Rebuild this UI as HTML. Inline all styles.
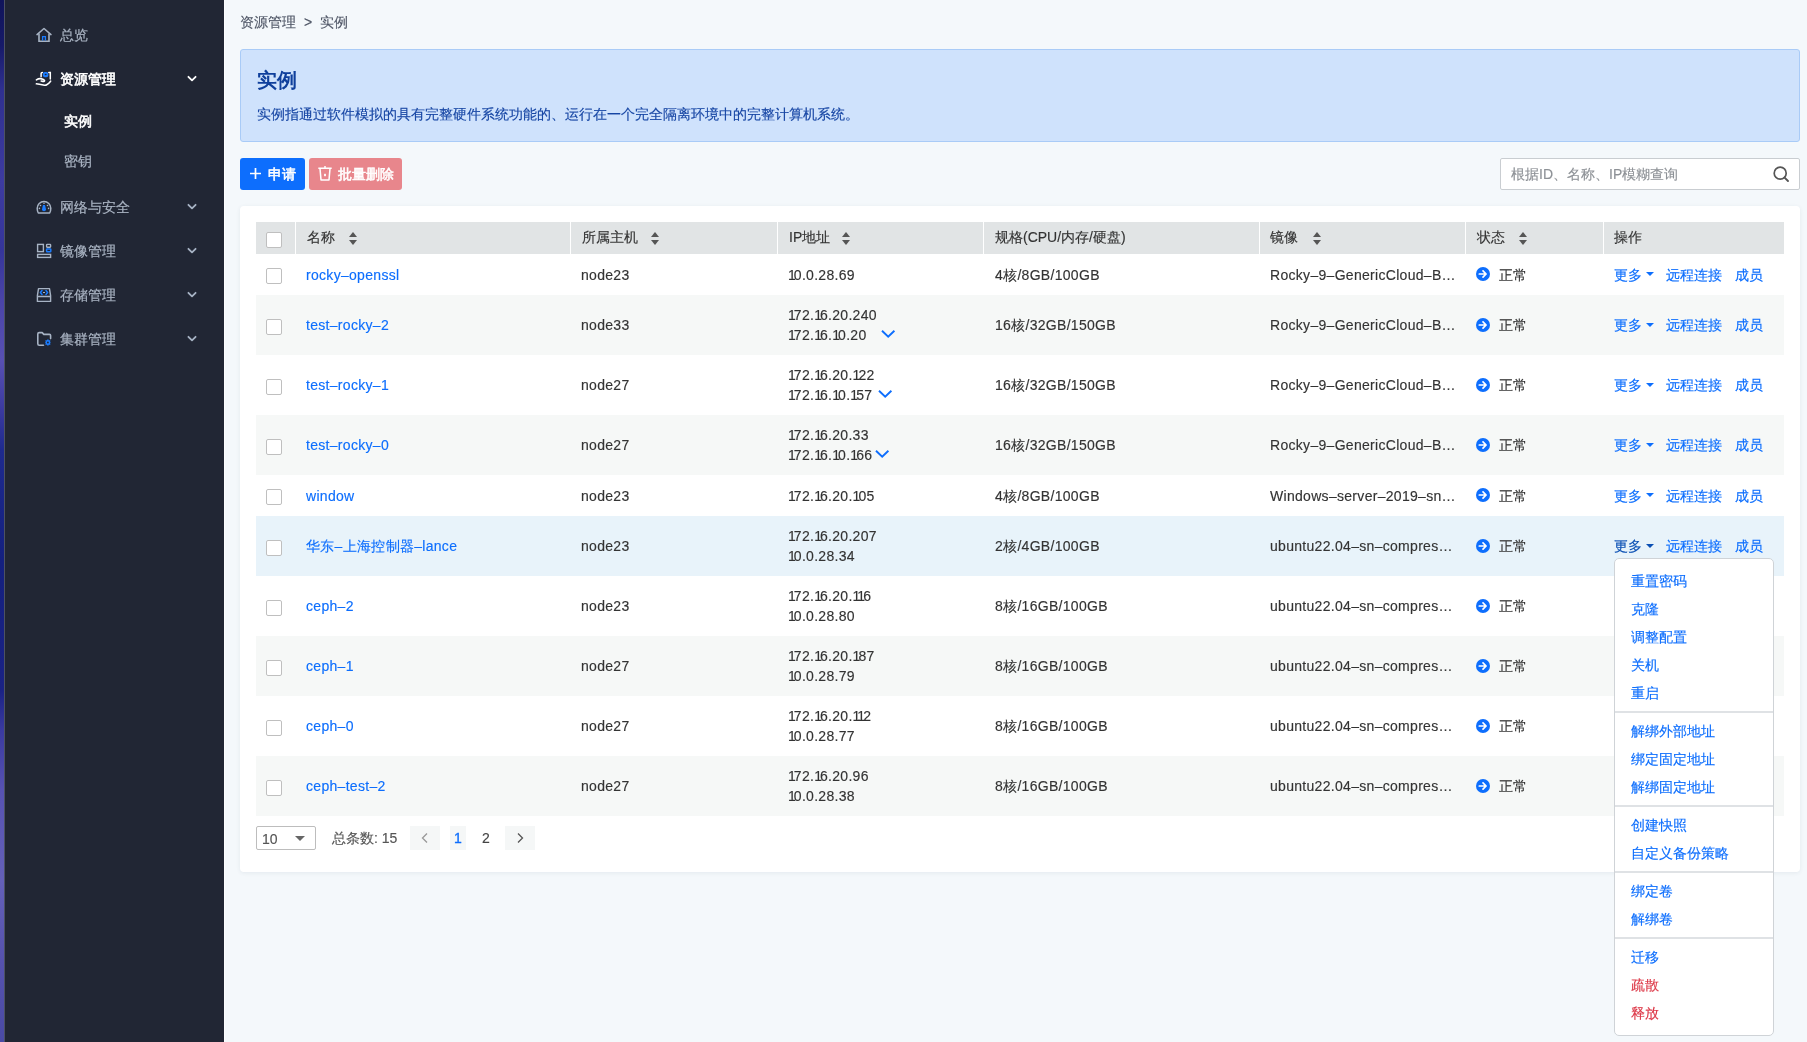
<!DOCTYPE html>
<html><head><meta charset="utf-8">
<style>
*{box-sizing:border-box;margin:0;padding:0}
html,body{width:1807px;height:1042px;overflow:hidden}
body{font-family:"Liberation Sans",sans-serif;font-size:14px;color:#333;background:#f4f8fb;position:relative;-webkit-text-stroke-width:0.15px}
.abs{position:absolute}
.mi{position:absolute;left:60px;height:20px;line-height:20px;color:#a9b3c2;font-size:14px;white-space:nowrap;-webkit-text-stroke-width:0.2px}
.mi.act{color:#fff;font-weight:normal;-webkit-text-stroke-width:0.6px}
.th{position:absolute;height:20px;line-height:20px;color:#333;white-space:nowrap}
.td{position:absolute;height:20px;line-height:20px;color:#333;white-space:nowrap;letter-spacing:0.3px}
.ip{letter-spacing:0.3px}
.n1{letter-spacing:-2px}
.cj{letter-spacing:0}
.lnk{color:#0d6efd}
.cb{position:absolute;width:16px;height:16px;border:1px solid #bfbfbf;border-radius:2px;background:#fff}
.sort{position:absolute;width:8px;height:14px}
.sort .up{position:absolute;left:0;top:0;width:0;height:0;border-left:4px solid transparent;border-right:4px solid transparent;border-bottom:5px solid #555}
.sort .dn{position:absolute;left:0;top:8px;width:0;height:0;border-left:4px solid transparent;border-right:4px solid transparent;border-top:5px solid #555}
.caret{position:absolute;width:0;height:0;border-left:4px solid transparent;border-right:4px solid transparent;border-top:4.5px solid #0d6efd}
.dd{position:absolute;left:1631px;height:20px;line-height:20px;color:#0d6efd;white-space:nowrap}

</style></head><body>
<div id="wrap" style="position:absolute;left:0;top:0;width:1807px;height:1042px;will-change:transform">
<div class="abs" style="left:0;top:0;width:5px;height:1042px;background:linear-gradient(180deg,#10145a 0px,#161a68 45px,#2f3090 90px,#3d3ba0 180px,#35359a 250px,#4a44a8 300px,#5850b2 360px,#3b3aa0 410px,#1e2a8e 450px,#14207e 560px,#1a2284 690px,#3a3aa0 730px,#5752b2 790px,#6460b8 880px,#5652ae 960px,#4a4aa4 1042px)"></div>
<div class="abs" style="left:4px;top:0;width:1px;height:1042px;background:#4d5262"></div>
<div class="abs" style="left:5px;top:0;width:219px;height:1042px;background:#212634"></div>
<div class="abs" style="left:224px;top:0;width:1px;height:1042px;background:#fcfdfe"></div>

<svg class="abs" style="left:32px;top:24px" width="24" height="24" viewBox="0 0 24 24"><path d="M5 10.6 L12 4.5 L19 10.6" fill="none" stroke="#a7b3c4" stroke-width="1.5" stroke-linejoin="round" stroke-linecap="round"/><path d="M7 9.5 V17.3 H17 V9.5" fill="none" stroke="#a7b3c4" stroke-width="1.6"/><path d="M10.6 16.5 V12.6 H13.4 V16.5" fill="none" stroke="#1b7cff" stroke-width="1.3"/></svg>
<div class="mi" style="top:25px">总览</div>

<svg class="abs" style="left:32px;top:68px" width="24" height="24" viewBox="0 0 24 24"><path d="M9.1 8.8 V5.6 Q9.1 4.4 10.4 4.4 M16.8 4.4 H18.3 V11" fill="none" stroke="#fff" stroke-width="1.5" stroke-linecap="round"/><rect x="10.9" y="4" width="5.4" height="5.2" rx="2" fill="#1b7cff"/><ellipse cx="13.7" cy="6.5" rx="1" ry="0.7" fill="#212634"/><path d="M4.4 11.9 Q7.5 9.8 10.8 11.2 L12.5 12.4 Q12.8 13.6 10.8 13.4 L9.2 13 M4.4 15.8 Q9 16.6 12.5 17.3 Q15 17.6 18.6 13.2" fill="none" stroke="#fff" stroke-width="1.6" stroke-linecap="round" stroke-linejoin="round"/></svg>
<div class="mi act" style="top:69px">资源管理</div>
<svg class="abs" style="left:180px;top:68px" width="24" height="24" viewBox="0 0 24 24"><path d="M8.4 8.8 L12 12.4 L15.6 8.8" fill="none" stroke="#fff" stroke-width="1.8" stroke-linecap="round" stroke-linejoin="round"/></svg>

<div class="mi act" style="top:111px;left:64px">实例</div>
<div class="mi" style="top:151px;left:64px">密钥</div>

<svg class="abs" style="left:32px;top:196px" width="24" height="24" viewBox="0 0 24 24"><path d="M6.3 17 Q5.2 15 5.2 12.3 A6.8 6.8 0 0 1 18.8 12.3 Q18.8 15 17.7 17 Z" fill="none" stroke="#a7b3c4" stroke-width="1.5" stroke-linejoin="round"/><circle cx="12" cy="7.3" r="0.8" fill="#a7b3c4"/><circle cx="8.5" cy="9.5" r="0.8" fill="#a7b3c4"/><circle cx="15.5" cy="9.5" r="0.8" fill="#a7b3c4"/><circle cx="7.4" cy="12.4" r="0.8" fill="#a7b3c4"/><circle cx="16.6" cy="12.4" r="0.8" fill="#a7b3c4"/><path d="M11 9 H13 L14 13.2 A2 2 0 1 1 10 13.2 Z" fill="#1b7cff"/></svg>
<div class="mi" style="top:197px">网络与安全</div>
<svg class="abs" style="left:180px;top:196px" width="24" height="24" viewBox="0 0 24 24"><path d="M8.4 8.8 L12 12.4 L15.6 8.8" fill="none" stroke="#a7b3c4" stroke-width="1.8" stroke-linecap="round" stroke-linejoin="round"/></svg>

<svg class="abs" style="left:32px;top:240px" width="24" height="24" viewBox="0 0 24 24"><rect x="5.6" y="4.4" width="5.8" height="7.2" fill="none" stroke="#a7b3c4" stroke-width="1.4"/><rect x="14.6" y="4.4" width="4" height="2.8" rx="0.6" fill="none" stroke="#a7b3c4" stroke-width="1.4"/><rect x="14.6" y="9" width="4.2" height="2.8" rx="0.6" fill="none" stroke="#1b7cff" stroke-width="1.5"/><rect x="5.6" y="14.4" width="13" height="3" fill="none" stroke="#a7b3c4" stroke-width="1.4"/></svg>
<div class="mi" style="top:241px">镜像管理</div>
<svg class="abs" style="left:180px;top:240px" width="24" height="24" viewBox="0 0 24 24"><path d="M8.4 8.8 L12 12.4 L15.6 8.8" fill="none" stroke="#a7b3c4" stroke-width="1.8" stroke-linecap="round" stroke-linejoin="round"/></svg>

<svg class="abs" style="left:32px;top:284px" width="24" height="24" viewBox="0 0 24 24"><path d="M6.5 4.6 H17.5 L18.6 11.6 V17.4 H5.4 V11.6 Z M5.4 12.5 H18.6" fill="none" stroke="#a7b3c4" stroke-width="1.4" stroke-linejoin="round"/><path d="M10 6.6 L8.4 8.5 L10 10.4 M14 6.6 L15.6 8.5 L14 10.4" fill="none" stroke="#1b7cff" stroke-width="1.5" stroke-linecap="round" stroke-linejoin="round"/><path d="M11 8.5 H13" stroke="#a7b3c4" stroke-width="1"/></svg>
<div class="mi" style="top:285px">存储管理</div>
<svg class="abs" style="left:180px;top:284px" width="24" height="24" viewBox="0 0 24 24"><path d="M8.4 8.8 L12 12.4 L15.6 8.8" fill="none" stroke="#a7b3c4" stroke-width="1.8" stroke-linecap="round" stroke-linejoin="round"/></svg>

<svg class="abs" style="left:32px;top:328px" width="24" height="24" viewBox="0 0 24 24"><path d="M11.5 17.2 H7.2 Q5.8 17.2 5.8 15.8 V6 Q5.8 4.6 7.2 4.6 H10.2 L11.8 6.4 H17.4 Q18.6 6.4 18.6 7.6 V10.6" fill="none" stroke="#a7b3c4" stroke-width="1.6" stroke-linecap="round" stroke-linejoin="round"/><g transform="translate(15.9 14.5)"><path d="M-0.7 -3 H0.7 L1 -2 L2 -2.5 L2.7 -1.5 L2 -0.7 L2.9 0 L2 0.7 L2.7 1.5 L2 2.5 L1 2 L0.7 3 H-0.7 L-1 2 L-2 2.5 L-2.7 1.5 L-2 0.7 L-2.9 0 L-2 -0.7 L-2.7 -1.5 L-2 -2.5 L-1 -2 Z" fill="#1b7cff"/><circle r="0.9" fill="#212634"/></g></svg>
<div class="mi" style="top:329px">集群管理</div>
<svg class="abs" style="left:180px;top:328px" width="24" height="24" viewBox="0 0 24 24"><path d="M8.4 8.8 L12 12.4 L15.6 8.8" fill="none" stroke="#a7b3c4" stroke-width="1.8" stroke-linecap="round" stroke-linejoin="round"/></svg>

<!-- breadcrumb -->
<div class="abs" style="left:240px;top:12px;line-height:20px;color:#4f5666;font-size:14px;white-space:nowrap">资源管理</div>
<div class="abs" style="left:304px;top:12px;line-height:20px;color:#4f5666;font-size:14px">&gt;</div>
<div class="abs" style="left:320px;top:12px;line-height:20px;color:#4f5666;font-size:14px">实例</div>

<!-- alert -->
<div class="abs" style="left:240px;top:49px;width:1560px;height:93px;background:#cfe2fc;border:1px solid #a9cbf7;border-radius:3px"></div>
<div class="abs" style="left:257px;top:67px;line-height:26px;font-size:20px;font-weight:bold;color:#0f3f9c;-webkit-text-stroke-width:0">实例</div>
<div class="abs" style="left:257px;top:104px;line-height:20px;font-size:14px;color:#1746a4;white-space:nowrap">实例指通过软件模拟的具有完整硬件系统功能的、运行在一个完全隔离环境中的完整计算机系统。</div>

<!-- buttons -->
<div class="abs" style="left:240px;top:158px;width:65px;height:32px;background:#0d6efd;border-radius:3px"></div>
<svg class="abs" style="left:249px;top:167px" width="14" height="14" viewBox="0 0 14 14"><path d="M6.5 1 V12 M1 6.5 H12" stroke="#fff" stroke-width="1.7"/></svg>
<div class="abs" style="left:268px;top:164px;line-height:20px;color:#fff;-webkit-text-stroke-width:0.55px">申请</div>
<div class="abs" style="left:309px;top:158px;width:93px;height:32px;background:#e8868c;border-radius:3px"></div>
<svg class="abs" style="left:317px;top:165px" width="16" height="16" viewBox="0 0 16 16"><path d="M1.3 3.3 H14.7 M8 1 V3.3" fill="none" stroke="#fff" stroke-width="1.5"/><path d="M3 3.6 L4 14.9 H12 L13 3.6" fill="none" stroke="#fff" stroke-width="1.5" stroke-linejoin="round"/><rect x="7.1" y="8.8" width="1.8" height="2.4" fill="#fff"/></svg>
<div class="abs" style="left:338px;top:164px;line-height:20px;color:#fff;-webkit-text-stroke-width:0.55px">批量删除</div>

<!-- search -->
<div class="abs" style="left:1500px;top:158px;width:300px;height:32px;background:#fff;border:1px solid #c9cdd1;border-radius:2px"></div>
<div class="abs" style="left:1511px;top:164px;line-height:20px;color:#8d9196;white-space:nowrap">根据ID、名称、IP模糊查询</div>
<svg class="abs" style="left:1771px;top:164px" width="20" height="20" viewBox="0 0 20 20"><circle cx="9.2" cy="9.2" r="6" fill="none" stroke="#555" stroke-width="1.7"/><path d="M13.6 13.6 L17 17" stroke="#555" stroke-width="1.9" stroke-linecap="round"/></svg>

<!-- card -->
<div class="abs" style="left:240px;top:206px;width:1560px;height:666px;background:#fff;border-radius:4px;box-shadow:0 1px 4px rgba(40,60,90,0.08)"></div>
<div class="abs" style="left:256px;top:222px;width:1528px;height:32px;background:#e1e4e5"></div>
<div class="abs" style="left:295px;top:222px;width:1px;height:32px;background:#fff"></div>
<div class="abs" style="left:570px;top:222px;width:1px;height:32px;background:#fff"></div>
<div class="abs" style="left:777px;top:222px;width:1px;height:32px;background:#fff"></div>
<div class="abs" style="left:983px;top:222px;width:1px;height:32px;background:#fff"></div>
<div class="abs" style="left:1259px;top:222px;width:1px;height:32px;background:#fff"></div>
<div class="abs" style="left:1465px;top:222px;width:1px;height:32px;background:#fff"></div>
<div class="abs" style="left:1603px;top:222px;width:1px;height:32px;background:#fff"></div>
<div class="cb" style="left:266px;top:232px"></div>
<div class="th" style="left:307px;top:227px">名称</div>
<div class="sort" style="left:349px;top:232px"><i class="up"></i><i class="dn"></i></div>
<div class="th" style="left:582px;top:227px">所属主机</div>
<div class="sort" style="left:651px;top:232px"><i class="up"></i><i class="dn"></i></div>
<div class="th" style="left:789px;top:227px">IP地址</div>
<div class="sort" style="left:842px;top:232px"><i class="up"></i><i class="dn"></i></div>
<div class="th" style="left:995px;top:227px">规格(CPU/内存/硬盘)</div>
<div class="th" style="left:1270px;top:227px">镜像</div>
<div class="sort" style="left:1313px;top:232px"><i class="up"></i><i class="dn"></i></div>
<div class="th" style="left:1477px;top:227px">状态</div>
<div class="sort" style="left:1519px;top:232px"><i class="up"></i><i class="dn"></i></div>
<div class="th" style="left:1614px;top:227px">操作</div>
<div class="abs" style="left:256px;top:254px;width:1528px;height:41px;background:#fff"></div>
<div class="cb" style="left:266px;top:268px"></div>
<div class="td lnk" style="left:306px;top:264.5px">rocky–openssl</div>
<div class="td" style="left:581px;top:264.5px">node23</div>
<div class="td ip" style="left:788px;top:264.5px"><span class="n1">1</span>0.0.28.69</div>
<div class="td" style="left:995px;top:264.5px">4核/8GB/100GB</div>
<div class="td" style="left:1270px;top:264.5px">Rocky–9–GenericCloud–B…</div>
<svg class="abs" style="left:1476px;top:267px" width="14" height="14" viewBox="0 0 14 14"><circle cx="7" cy="7" r="7" fill="#0d6efd"/><path d="M3.3 7 H10 M7 3.9 L10.1 7 L7 10.1" fill="none" stroke="#fff" stroke-width="1.7" stroke-linecap="round" stroke-linejoin="round"/></svg>
<div class="td cj" style="left:1499px;top:264.5px">正常</div>
<div class="td cj" style="left:1614px;top:264.5px;color:#0d6efd">更多</div>
<div class="caret" style="left:1646px;top:272px;border-top-color:#0d6efd"></div>
<div class="td lnk cj" style="left:1666px;top:264.5px">远程连接</div>
<div class="td lnk cj" style="left:1735px;top:264.5px">成员</div>
<div class="abs" style="left:256px;top:295px;width:1528px;height:60px;background:#f6f8f7"></div>
<div class="cb" style="left:266px;top:319px"></div>
<div class="td lnk" style="left:306px;top:315.0px">test–rocky–2</div>
<div class="td" style="left:581px;top:315.0px">node33</div>
<div class="td ip" style="left:788px;top:305.0px"><span class="n1">1</span>72.<span class="n1">1</span>6.20.240</div>
<div class="td ip" style="left:788px;top:325.0px"><span class="n1">1</span>72.<span class="n1">1</span>6.<span class="n1">1</span>0.20</div>
<svg class="abs" style="left:881px;top:329px" width="16" height="10" viewBox="0 0 16 10"><path d="M1 1.8 L7.2 7.6 L13.4 1.8" fill="none" stroke="#0d6efd" stroke-width="1.9"/></svg>
<div class="td" style="left:995px;top:315.0px">16核/32GB/150GB</div>
<div class="td" style="left:1270px;top:315.0px">Rocky–9–GenericCloud–B…</div>
<svg class="abs" style="left:1476px;top:318px" width="14" height="14" viewBox="0 0 14 14"><circle cx="7" cy="7" r="7" fill="#0d6efd"/><path d="M3.3 7 H10 M7 3.9 L10.1 7 L7 10.1" fill="none" stroke="#fff" stroke-width="1.7" stroke-linecap="round" stroke-linejoin="round"/></svg>
<div class="td cj" style="left:1499px;top:315.0px">正常</div>
<div class="td cj" style="left:1614px;top:315.0px;color:#0d6efd">更多</div>
<div class="caret" style="left:1646px;top:323px;border-top-color:#0d6efd"></div>
<div class="td lnk cj" style="left:1666px;top:315.0px">远程连接</div>
<div class="td lnk cj" style="left:1735px;top:315.0px">成员</div>
<div class="abs" style="left:256px;top:355px;width:1528px;height:60px;background:#fff"></div>
<div class="cb" style="left:266px;top:379px"></div>
<div class="td lnk" style="left:306px;top:375.0px">test–rocky–1</div>
<div class="td" style="left:581px;top:375.0px">node27</div>
<div class="td ip" style="left:788px;top:365.0px"><span class="n1">1</span>72.<span class="n1">1</span>6.20.<span class="n1">1</span>22</div>
<div class="td ip" style="left:788px;top:385.0px"><span class="n1">1</span>72.<span class="n1">1</span>6.<span class="n1">1</span>0.<span class="n1">1</span>57</div>
<svg class="abs" style="left:878px;top:389px" width="16" height="10" viewBox="0 0 16 10"><path d="M1 1.8 L7.2 7.6 L13.4 1.8" fill="none" stroke="#0d6efd" stroke-width="1.9"/></svg>
<div class="td" style="left:995px;top:375.0px">16核/32GB/150GB</div>
<div class="td" style="left:1270px;top:375.0px">Rocky–9–GenericCloud–B…</div>
<svg class="abs" style="left:1476px;top:378px" width="14" height="14" viewBox="0 0 14 14"><circle cx="7" cy="7" r="7" fill="#0d6efd"/><path d="M3.3 7 H10 M7 3.9 L10.1 7 L7 10.1" fill="none" stroke="#fff" stroke-width="1.7" stroke-linecap="round" stroke-linejoin="round"/></svg>
<div class="td cj" style="left:1499px;top:375.0px">正常</div>
<div class="td cj" style="left:1614px;top:375.0px;color:#0d6efd">更多</div>
<div class="caret" style="left:1646px;top:383px;border-top-color:#0d6efd"></div>
<div class="td lnk cj" style="left:1666px;top:375.0px">远程连接</div>
<div class="td lnk cj" style="left:1735px;top:375.0px">成员</div>
<div class="abs" style="left:256px;top:415px;width:1528px;height:60px;background:#f6f8f7"></div>
<div class="cb" style="left:266px;top:439px"></div>
<div class="td lnk" style="left:306px;top:435.0px">test–rocky–0</div>
<div class="td" style="left:581px;top:435.0px">node27</div>
<div class="td ip" style="left:788px;top:425.0px"><span class="n1">1</span>72.<span class="n1">1</span>6.20.33</div>
<div class="td ip" style="left:788px;top:445.0px"><span class="n1">1</span>72.<span class="n1">1</span>6.<span class="n1">1</span>0.<span class="n1">1</span>66</div>
<svg class="abs" style="left:875px;top:449px" width="16" height="10" viewBox="0 0 16 10"><path d="M1 1.8 L7.2 7.6 L13.4 1.8" fill="none" stroke="#0d6efd" stroke-width="1.9"/></svg>
<div class="td" style="left:995px;top:435.0px">16核/32GB/150GB</div>
<div class="td" style="left:1270px;top:435.0px">Rocky–9–GenericCloud–B…</div>
<svg class="abs" style="left:1476px;top:438px" width="14" height="14" viewBox="0 0 14 14"><circle cx="7" cy="7" r="7" fill="#0d6efd"/><path d="M3.3 7 H10 M7 3.9 L10.1 7 L7 10.1" fill="none" stroke="#fff" stroke-width="1.7" stroke-linecap="round" stroke-linejoin="round"/></svg>
<div class="td cj" style="left:1499px;top:435.0px">正常</div>
<div class="td cj" style="left:1614px;top:435.0px;color:#0d6efd">更多</div>
<div class="caret" style="left:1646px;top:443px;border-top-color:#0d6efd"></div>
<div class="td lnk cj" style="left:1666px;top:435.0px">远程连接</div>
<div class="td lnk cj" style="left:1735px;top:435.0px">成员</div>
<div class="abs" style="left:256px;top:475px;width:1528px;height:41px;background:#fff"></div>
<div class="cb" style="left:266px;top:489px"></div>
<div class="td lnk" style="left:306px;top:485.5px">window</div>
<div class="td" style="left:581px;top:485.5px">node23</div>
<div class="td ip" style="left:788px;top:485.5px"><span class="n1">1</span>72.<span class="n1">1</span>6.20.<span class="n1">1</span>05</div>
<div class="td" style="left:995px;top:485.5px">4核/8GB/100GB</div>
<div class="td" style="left:1270px;top:485.5px">Windows–server–2019–sn…</div>
<svg class="abs" style="left:1476px;top:488px" width="14" height="14" viewBox="0 0 14 14"><circle cx="7" cy="7" r="7" fill="#0d6efd"/><path d="M3.3 7 H10 M7 3.9 L10.1 7 L7 10.1" fill="none" stroke="#fff" stroke-width="1.7" stroke-linecap="round" stroke-linejoin="round"/></svg>
<div class="td cj" style="left:1499px;top:485.5px">正常</div>
<div class="td cj" style="left:1614px;top:485.5px;color:#0d6efd">更多</div>
<div class="caret" style="left:1646px;top:493px;border-top-color:#0d6efd"></div>
<div class="td lnk cj" style="left:1666px;top:485.5px">远程连接</div>
<div class="td lnk cj" style="left:1735px;top:485.5px">成员</div>
<div class="abs" style="left:256px;top:516px;width:1528px;height:60px;background:#e8f3fa"></div>
<div class="cb" style="left:266px;top:540px"></div>
<div class="td lnk" style="left:306px;top:536.0px">华东–上海控制器–lance</div>
<div class="td" style="left:581px;top:536.0px">node23</div>
<div class="td ip" style="left:788px;top:526.0px"><span class="n1">1</span>72.<span class="n1">1</span>6.20.207</div>
<div class="td ip" style="left:788px;top:546.0px"><span class="n1">1</span>0.0.28.34</div>
<div class="td" style="left:995px;top:536.0px">2核/4GB/100GB</div>
<div class="td" style="left:1270px;top:536.0px">ubuntu22.04–sn–compres…</div>
<svg class="abs" style="left:1476px;top:539px" width="14" height="14" viewBox="0 0 14 14"><circle cx="7" cy="7" r="7" fill="#0d6efd"/><path d="M3.3 7 H10 M7 3.9 L10.1 7 L7 10.1" fill="none" stroke="#fff" stroke-width="1.7" stroke-linecap="round" stroke-linejoin="round"/></svg>
<div class="td cj" style="left:1499px;top:536.0px">正常</div>
<div class="td cj" style="left:1614px;top:536.0px;color:#0a4fb3">更多</div>
<div class="caret" style="left:1646px;top:544px;border-top-color:#0a4fb3"></div>
<div class="td lnk cj" style="left:1666px;top:536.0px">远程连接</div>
<div class="td lnk cj" style="left:1735px;top:536.0px">成员</div>
<div class="abs" style="left:256px;top:576px;width:1528px;height:60px;background:#fff"></div>
<div class="cb" style="left:266px;top:600px"></div>
<div class="td lnk" style="left:306px;top:596.0px">ceph–2</div>
<div class="td" style="left:581px;top:596.0px">node23</div>
<div class="td ip" style="left:788px;top:586.0px"><span class="n1">1</span>72.<span class="n1">1</span>6.20.<span class="n1">1</span><span class="n1">1</span>6</div>
<div class="td ip" style="left:788px;top:606.0px"><span class="n1">1</span>0.0.28.80</div>
<div class="td" style="left:995px;top:596.0px">8核/16GB/100GB</div>
<div class="td" style="left:1270px;top:596.0px">ubuntu22.04–sn–compres…</div>
<svg class="abs" style="left:1476px;top:599px" width="14" height="14" viewBox="0 0 14 14"><circle cx="7" cy="7" r="7" fill="#0d6efd"/><path d="M3.3 7 H10 M7 3.9 L10.1 7 L7 10.1" fill="none" stroke="#fff" stroke-width="1.7" stroke-linecap="round" stroke-linejoin="round"/></svg>
<div class="td cj" style="left:1499px;top:596.0px">正常</div>
<div class="td cj" style="left:1614px;top:596.0px;color:#0d6efd">更多</div>
<div class="caret" style="left:1646px;top:604px;border-top-color:#0d6efd"></div>
<div class="td lnk cj" style="left:1666px;top:596.0px">远程连接</div>
<div class="td lnk cj" style="left:1735px;top:596.0px">成员</div>
<div class="abs" style="left:256px;top:636px;width:1528px;height:60px;background:#f6f8f7"></div>
<div class="cb" style="left:266px;top:660px"></div>
<div class="td lnk" style="left:306px;top:656.0px">ceph–1</div>
<div class="td" style="left:581px;top:656.0px">node27</div>
<div class="td ip" style="left:788px;top:646.0px"><span class="n1">1</span>72.<span class="n1">1</span>6.20.<span class="n1">1</span>87</div>
<div class="td ip" style="left:788px;top:666.0px"><span class="n1">1</span>0.0.28.79</div>
<div class="td" style="left:995px;top:656.0px">8核/16GB/100GB</div>
<div class="td" style="left:1270px;top:656.0px">ubuntu22.04–sn–compres…</div>
<svg class="abs" style="left:1476px;top:659px" width="14" height="14" viewBox="0 0 14 14"><circle cx="7" cy="7" r="7" fill="#0d6efd"/><path d="M3.3 7 H10 M7 3.9 L10.1 7 L7 10.1" fill="none" stroke="#fff" stroke-width="1.7" stroke-linecap="round" stroke-linejoin="round"/></svg>
<div class="td cj" style="left:1499px;top:656.0px">正常</div>
<div class="td cj" style="left:1614px;top:656.0px;color:#0d6efd">更多</div>
<div class="caret" style="left:1646px;top:664px;border-top-color:#0d6efd"></div>
<div class="td lnk cj" style="left:1666px;top:656.0px">远程连接</div>
<div class="td lnk cj" style="left:1735px;top:656.0px">成员</div>
<div class="abs" style="left:256px;top:696px;width:1528px;height:60px;background:#fff"></div>
<div class="cb" style="left:266px;top:720px"></div>
<div class="td lnk" style="left:306px;top:716.0px">ceph–0</div>
<div class="td" style="left:581px;top:716.0px">node27</div>
<div class="td ip" style="left:788px;top:706.0px"><span class="n1">1</span>72.<span class="n1">1</span>6.20.<span class="n1">1</span><span class="n1">1</span>2</div>
<div class="td ip" style="left:788px;top:726.0px"><span class="n1">1</span>0.0.28.77</div>
<div class="td" style="left:995px;top:716.0px">8核/16GB/100GB</div>
<div class="td" style="left:1270px;top:716.0px">ubuntu22.04–sn–compres…</div>
<svg class="abs" style="left:1476px;top:719px" width="14" height="14" viewBox="0 0 14 14"><circle cx="7" cy="7" r="7" fill="#0d6efd"/><path d="M3.3 7 H10 M7 3.9 L10.1 7 L7 10.1" fill="none" stroke="#fff" stroke-width="1.7" stroke-linecap="round" stroke-linejoin="round"/></svg>
<div class="td cj" style="left:1499px;top:716.0px">正常</div>
<div class="td cj" style="left:1614px;top:716.0px;color:#0d6efd">更多</div>
<div class="caret" style="left:1646px;top:724px;border-top-color:#0d6efd"></div>
<div class="td lnk cj" style="left:1666px;top:716.0px">远程连接</div>
<div class="td lnk cj" style="left:1735px;top:716.0px">成员</div>
<div class="abs" style="left:256px;top:756px;width:1528px;height:60px;background:#f6f8f7"></div>
<div class="cb" style="left:266px;top:780px"></div>
<div class="td lnk" style="left:306px;top:776.0px">ceph–test–2</div>
<div class="td" style="left:581px;top:776.0px">node27</div>
<div class="td ip" style="left:788px;top:766.0px"><span class="n1">1</span>72.<span class="n1">1</span>6.20.96</div>
<div class="td ip" style="left:788px;top:786.0px"><span class="n1">1</span>0.0.28.38</div>
<div class="td" style="left:995px;top:776.0px">8核/16GB/100GB</div>
<div class="td" style="left:1270px;top:776.0px">ubuntu22.04–sn–compres…</div>
<svg class="abs" style="left:1476px;top:779px" width="14" height="14" viewBox="0 0 14 14"><circle cx="7" cy="7" r="7" fill="#0d6efd"/><path d="M3.3 7 H10 M7 3.9 L10.1 7 L7 10.1" fill="none" stroke="#fff" stroke-width="1.7" stroke-linecap="round" stroke-linejoin="round"/></svg>
<div class="td cj" style="left:1499px;top:776.0px">正常</div>
<div class="td cj" style="left:1614px;top:776.0px;color:#0d6efd">更多</div>
<div class="caret" style="left:1646px;top:784px;border-top-color:#0d6efd"></div>
<div class="td lnk cj" style="left:1666px;top:776.0px">远程连接</div>
<div class="td lnk cj" style="left:1735px;top:776.0px">成员</div>
<!-- pagination -->
<div class="abs" style="left:256px;top:826px;width:60px;height:24px;border:1px solid #bdbdbd;border-radius:2px;background:#fff"></div>
<div class="td cj" style="left:262px;top:829px;color:#555">10</div>
<div class="abs" style="left:295px;top:836px;width:0;height:0;border-left:5px solid transparent;border-right:5px solid transparent;border-top:5px solid #666"></div>
<div class="td cj" style="left:332px;top:828px;color:#555">总条数: 15</div>
<div class="abs" style="left:410px;top:826px;width:30px;height:24px;background:#f5f7f7"></div>
<svg class="abs" style="left:419px;top:832px" width="12" height="12" viewBox="0 0 12 12"><path d="M8 1.5 L3.5 6 L8 10.5" fill="none" stroke="#999" stroke-width="1.3"/></svg>
<div class="abs" style="left:450px;top:826px;width:16px;height:24px;background:#f5f7f7"></div>
<div class="td" style="left:454px;top:828px;color:#0d6efd;-webkit-text-stroke:0.3px #0d6efd">1</div>
<div class="td cj" style="left:482px;top:828px;color:#444">2</div>
<div class="abs" style="left:505px;top:826px;width:30px;height:24px;background:#f5f7f7"></div>
<svg class="abs" style="left:514px;top:832px" width="12" height="12" viewBox="0 0 12 12"><path d="M4 1.5 L8.5 6 L4 10.5" fill="none" stroke="#555" stroke-width="1.3"/></svg>

<!-- dropdown -->
<div class="abs" style="left:1614px;top:558px;width:160px;height:478px;background:#fff;border:1px solid #cfd3d7;border-radius:5px"></div>
<div class="dd" style="top:571px">重置密码</div>
<div class="dd" style="top:599px">克隆</div>
<div class="dd" style="top:627px">调整配置</div>
<div class="dd" style="top:655px">关机</div>
<div class="dd" style="top:683px">重启</div>
<div class="abs" style="left:1615px;top:711px;width:158px;height:2px;background:#dfe2e5"></div>
<div class="dd" style="top:721px">解绑外部地址</div>
<div class="dd" style="top:749px">绑定固定地址</div>
<div class="dd" style="top:777px">解绑固定地址</div>
<div class="abs" style="left:1615px;top:805px;width:158px;height:2px;background:#dfe2e5"></div>
<div class="dd" style="top:815px">创建快照</div>
<div class="dd" style="top:843px">自定义备份策略</div>
<div class="abs" style="left:1615px;top:871px;width:158px;height:2px;background:#dfe2e5"></div>
<div class="dd" style="top:881px">绑定卷</div>
<div class="dd" style="top:909px">解绑卷</div>
<div class="abs" style="left:1615px;top:937px;width:158px;height:2px;background:#dfe2e5"></div>
<div class="dd" style="top:947px">迁移</div>
<div class="dd" style="top:975px;color:#dc3545">疏散</div>
<div class="dd" style="top:1003px;color:#dc3545">释放</div>
</div>
</body></html>
